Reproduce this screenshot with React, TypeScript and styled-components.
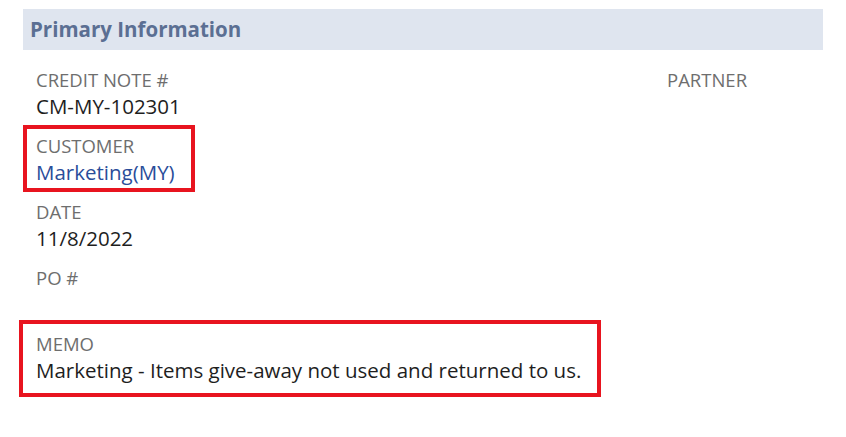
import React from "react";
import styled, { createGlobalStyle } from "styled-components";

const GlobalStyle = createGlobalStyle`
  html, body {
    margin: 0;
    padding: 0;
    background: #ffffff;
    font-family: "Open Sans", "Liberation Sans", sans-serif;
  }
`;

type FieldData = { label: string; value?: string; link?: boolean; highlight?: boolean };

const leftFields: FieldData[] = [
  { label: "CREDIT NOTE #", value: "CM-MY-102301" },
  { label: "CUSTOMER", value: "Marketing(MY)", link: true, highlight: true },
  { label: "DATE", value: "11/8/2022" },
  { label: "PO #" },
];

export default function App() {
  return (
    <>
      <GlobalStyle />
      <Section>
        <Header>Primary Information</Header>
        <Body>
          <Column>
            {leftFields.map((f) => (
              <Field key={f.label} $highlight={f.highlight}>
                <Label>{f.label}</Label>
                <Value $link={f.link}>{f.value ?? ""}</Value>
              </Field>
            ))}
          </Column>
          <Column>
            <Field>
              <Label>PARTNER</Label>
            </Field>
          </Column>
        </Body>
        <Memo>
          <Field>
            <Label>MEMO</Label>
            <Value>Marketing - Items give-away not used and returned to us.</Value>
          </Field>
        </Memo>
      </Section>
    </>
  );
}

const Section = styled.section`
  padding: 9px 0 0 23px;
  width: 800px;
`;

const Header = styled.h2`
  margin: 0;
  height: 41px;
  line-height: 41px;
  padding-left: 7px;
  background: #dfe5ef;
  color: #5b6f93;
  font-size: 20.5px;
  font-weight: 700;
`;

const Body = styled.div`
  display: grid;
  grid-template-columns: 631px 1fr;
  padding: 17px 0 0 13px;
`;

const Column = styled.div`
  display: flex;
  flex-direction: column;
  align-items: flex-start;
  gap: 14px;
`;

const Field = styled.div<{ $highlight?: boolean }>`
  position: relative;
  display: flex;
  flex-direction: column;

  &::before {
    content: "";
    display: ${(p) => (p.$highlight ? "block" : "none")};
    position: absolute;
    top: -8px;
    left: -13px;
    right: -20px;
    bottom: -7px;
    border: 4px solid #e8141f;
  }
`;

const Label = styled.div`
  height: 26px;
  line-height: 26px;
  font-size: 18.5px;
  color: #6e6e6e;
`;

const Value = styled.div<{ $link?: boolean }>`
  height: 26px;
  line-height: 26px;
  font-size: 20.5px;
  color: ${(p) => (p.$link ? "#2a4d9a" : "#1e1e1e")};
`;

const Memo = styled.div`
  margin: 3px 0 0 -4px;
  width: fit-content;
  padding: 7px 16px 10px 13px;
  border: 4px solid #e8141f;
`;
